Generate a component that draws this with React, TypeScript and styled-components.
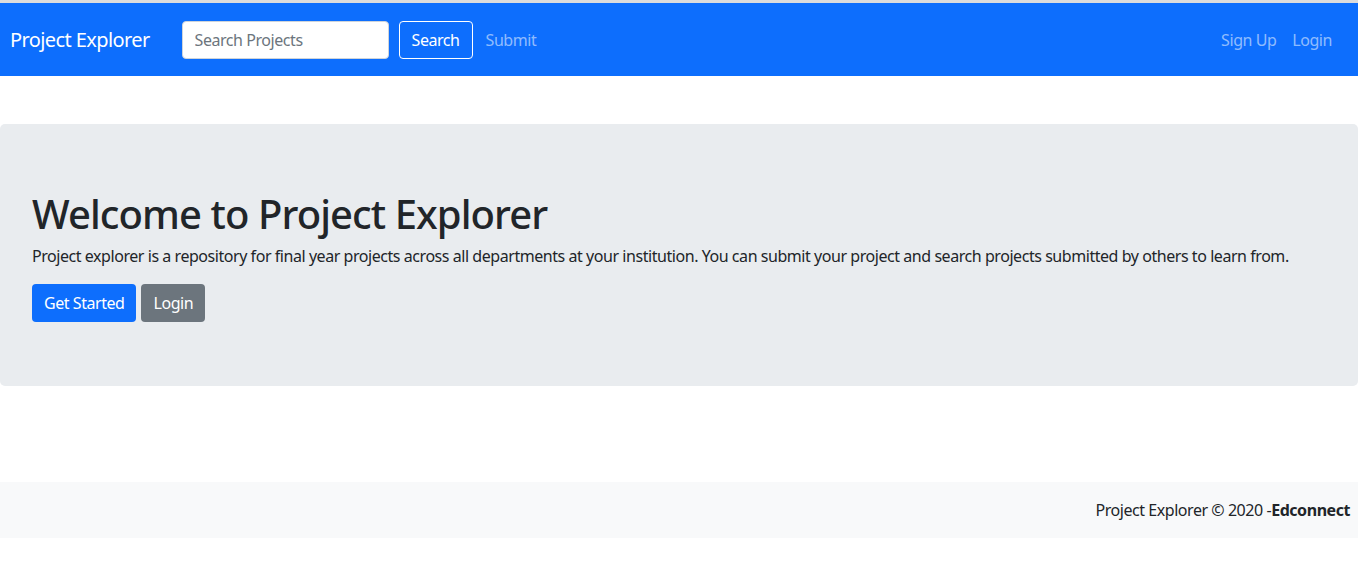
import React from "react";
import styled, { createGlobalStyle } from "styled-components";

const GlobalStyle = createGlobalStyle`
  html, body { margin: 0; padding: 0; background: #fff; }
  body {
    font-family: "Noto Sans", "Segoe UI", Roboto, sans-serif;
    font-size: 16px;
    line-height: 1.5;
    letter-spacing: -0.028em;
    color: #212529;
    border-top: 3px solid #dcdcdc;
  }
  * { box-sizing: border-box; }
  input, button { letter-spacing: -0.028em; }
`;

const Navbar = styled.nav`
  height: 73px;
  background: #0d6efd;
  display: flex;
  align-items: center;
  padding: 0 26px 0 10px;
`;

const Brand = styled.a`
  color: #fff;
  font-size: 20px;
  line-height: 30px;
  letter-spacing: -0.03em;
  text-decoration: none;
  margin-right: 32px;
  white-space: nowrap;
`;

const SearchForm = styled.form`
  display: flex;
  align-items: center;
  gap: 10px;
  margin: 0;
`;

const SearchInput = styled.input`
  width: 207px;
  height: 38px;
  padding: 6px 12px;
  font: inherit;
  font-size: 16px;
  color: #212529;
  background: #fff;
  border: 1px solid #ced4da;
  border-radius: 4px;
  outline: none;
  &::placeholder { color: #6c757d; }
`;

const OutlineButton = styled.button`
  height: 38px;
  padding: 6px 12px;
  font: inherit;
  font-size: 16px;
  color: #fff;
  background: transparent;
  border: 1px solid #fff;
  border-radius: 4px;
`;

const NavLinks = styled.div<{ $push?: boolean }>`
  display: flex;
  align-items: center;
  gap: 16px;
  margin-left: ${(p) => (p.$push ? "auto" : "13px")};
`;

const NavLink = styled.a`
  color: rgba(255, 255, 255, 0.55);
  text-decoration: none;
  font-size: 16px;
`;

const Main = styled.main`
  padding-top: 48px;
  min-height: 406px;
`;

const Jumbotron = styled.section`
  background: #e9ecef;
  border-radius: 5px;
  padding: 66px 32px 64px;
`;

const Title = styled.h1`
  margin: 0 0 6px;
  font-size: 40px;
  font-weight: 500;
  line-height: 1.2;
  letter-spacing: -0.023em;
`;

const Lead = styled.p`
  margin: 0 0 16px;
  font-size: 16px;
  line-height: 24px;
`;

const Actions = styled.div`
  display: flex;
  gap: 5px;
`;

const Button = styled.a<{ $variant: "primary" | "secondary" }>`
  display: inline-flex;
  align-items: center;
  height: 38px;
  padding: 0 12px;
  border-radius: 4px;
  color: #fff;
  text-decoration: none;
  background: ${(p) => (p.$variant === "primary" ? "#0d6efd" : "#6c757d")};
`;

const Footer = styled.footer`
  background: #f8f9fa;
  padding: 16px 8px;
  line-height: 24px;
  text-align: right;
`;

export default function App() {
  return (
    <>
      <GlobalStyle />
      <Navbar>
        <Brand href="#">Project Explorer</Brand>
        <SearchForm onSubmit={(e) => e.preventDefault()}>
          <SearchInput placeholder="Search Projects" />
          <OutlineButton type="submit">Search</OutlineButton>
        </SearchForm>
        <NavLinks>
          <NavLink href="#">Submit</NavLink>
        </NavLinks>
        <NavLinks $push>
          <NavLink href="#">Sign Up</NavLink>
          <NavLink href="#">Login</NavLink>
        </NavLinks>
      </Navbar>
      <Main>
        <Jumbotron>
          <Title>Welcome to Project Explorer</Title>
          <Lead>
            Project explorer is a repository for final year projects across all departments at your
            institution. You can submit your project and search projects submitted by others to
            learn from.
          </Lead>
          <Actions>
            <Button $variant="primary" href="#">Get Started</Button>
            <Button $variant="secondary" href="#">Login</Button>
          </Actions>
        </Jumbotron>
      </Main>
      <Footer>
        Project Explorer © 2020 -<b>Edconnect</b>
      </Footer>
    </>
  );
}
